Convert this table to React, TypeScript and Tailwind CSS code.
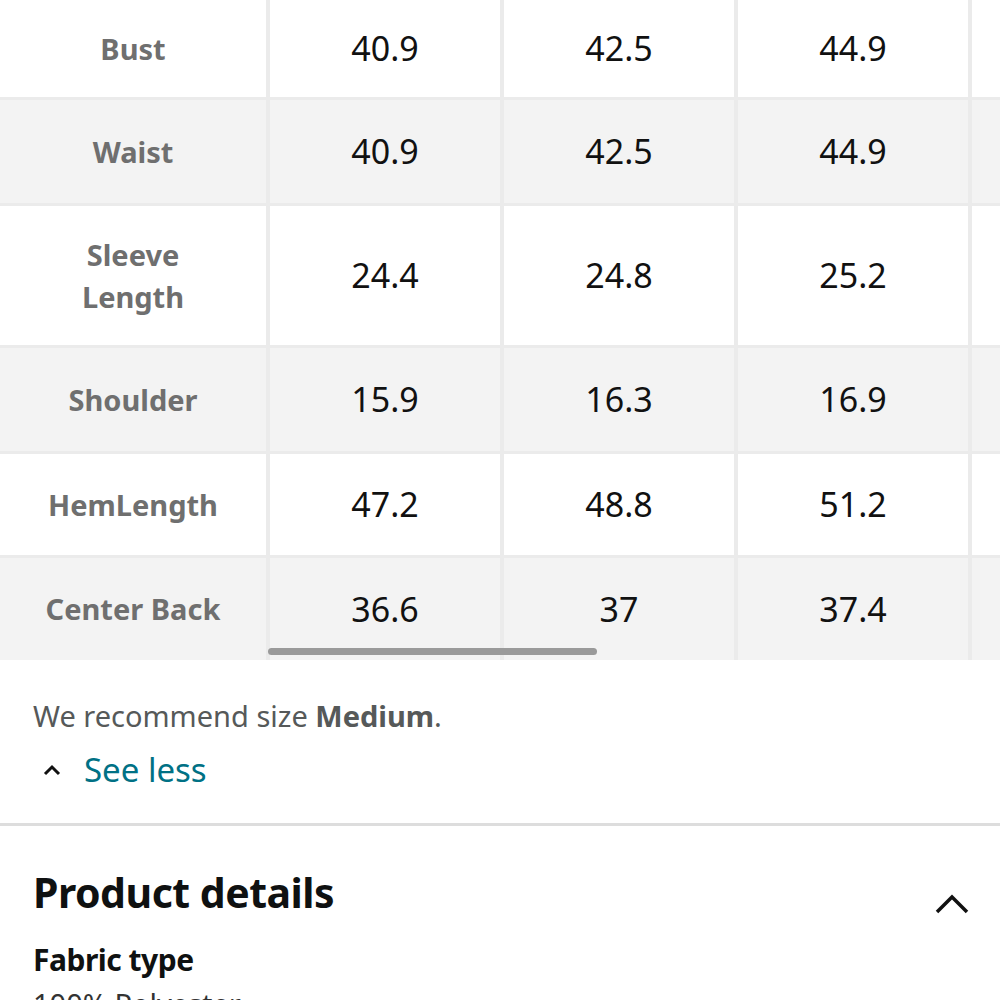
import React from "react";

const rows: { label: string[]; vals: string[]; h: string; grey: boolean }[] = [
  { label: ["Bust"], vals: ["40.9", "42.5", "44.9"], h: "h-[100px]", grey: false },
  { label: ["Waist"], vals: ["40.9", "42.5", "44.9"], h: "h-[106px]", grey: true },
  { label: ["Sleeve", "Length"], vals: ["24.4", "24.8", "25.2"], h: "h-[142px]", grey: false },
  { label: ["Shoulder"], vals: ["15.9", "16.3", "16.9"], h: "h-[106px]", grey: true },
  { label: ["HemLength"], vals: ["47.2", "48.8", "51.2"], h: "h-[104px]", grey: false },
  { label: ["Center Back"], vals: ["36.6", "37", "37.4"], h: "h-[102px]", grey: true },
];

export default function App() {
  return (
    <div
      className="w-[1000px] h-[1000px] overflow-hidden bg-white"
      style={{ fontFamily: '"Noto Sans", "Open Sans", sans-serif' }}
    >
      <div className="relative">
        {rows.map((r, i) => (
          <div
            key={i}
            className={`flex ${r.h} ${i < rows.length - 1 ? "border-b-[3px] border-[#ebebeb]" : ""} ${r.grey ? "bg-[#f3f3f3]" : "bg-white"}`}
          >
            <div className="w-[270px] shrink-0 border-r-[4px] border-[#ebebeb] flex flex-col items-center justify-center text-[29px] font-bold text-[#6f6f6f] leading-[42px]">
              {r.label.map((l) => (
                <span key={l}>{l}</span>
              ))}
            </div>
            {r.vals.map((v, j) => (
              <div
                key={j}
                className="w-[234px] shrink-0 border-r-[4px] border-[#ebebeb] flex items-center justify-center text-[34px] text-[#111111]"
              >
                {v}
              </div>
            ))}
            <div className="flex-1" />
          </div>
        ))}
        <div className="absolute left-[268px] bottom-[5px] w-[329px] h-[7px] rounded-full bg-[#9a9a9a]" />
      </div>

      <div className="px-[33px] pt-[36px] pb-[33px]">
        <div className="text-[29px] text-[#565959] leading-[40px]">
          We recommend size <span className="font-bold">Medium</span>.
        </div>
        <div className="flex items-center mt-[14px] leading-[40px]">
          <svg width="20" height="12" viewBox="0 0 20 12" className="ml-[9px] mr-[22px]">
            <path d="M3 10 L10 3 L17 10" fill="none" stroke="#111" strokeWidth="3" />
          </svg>
          <span className="text-[33px] text-[#007185]">See less</span>
        </div>
      </div>
      <div className="h-[3px] bg-[#dddddd]" />

      <div className="pl-[33px] pr-[30px] pt-[38px]">
        <div className="flex items-center justify-between">
          <span className="text-[41px] font-bold text-[#0f1111] tracking-[-0.5px] leading-[56px]">Product details</span>
          <svg width="36" height="22" viewBox="0 0 36 22" className="mt-[24px]">
            <path d="M3 19 L18 4 L33 19" fill="none" stroke="#111" strokeWidth="3.5" />
          </svg>
        </div>
        <div className="mt-[20px] text-[30px] font-bold text-[#0f1111] tracking-[-0.5px] leading-[40px]">Fabric type</div>
        <div className="mt-[4px] text-[29px] text-[#333] leading-[40px]">100% Polyester</div>
      </div>
    </div>
  );
}
